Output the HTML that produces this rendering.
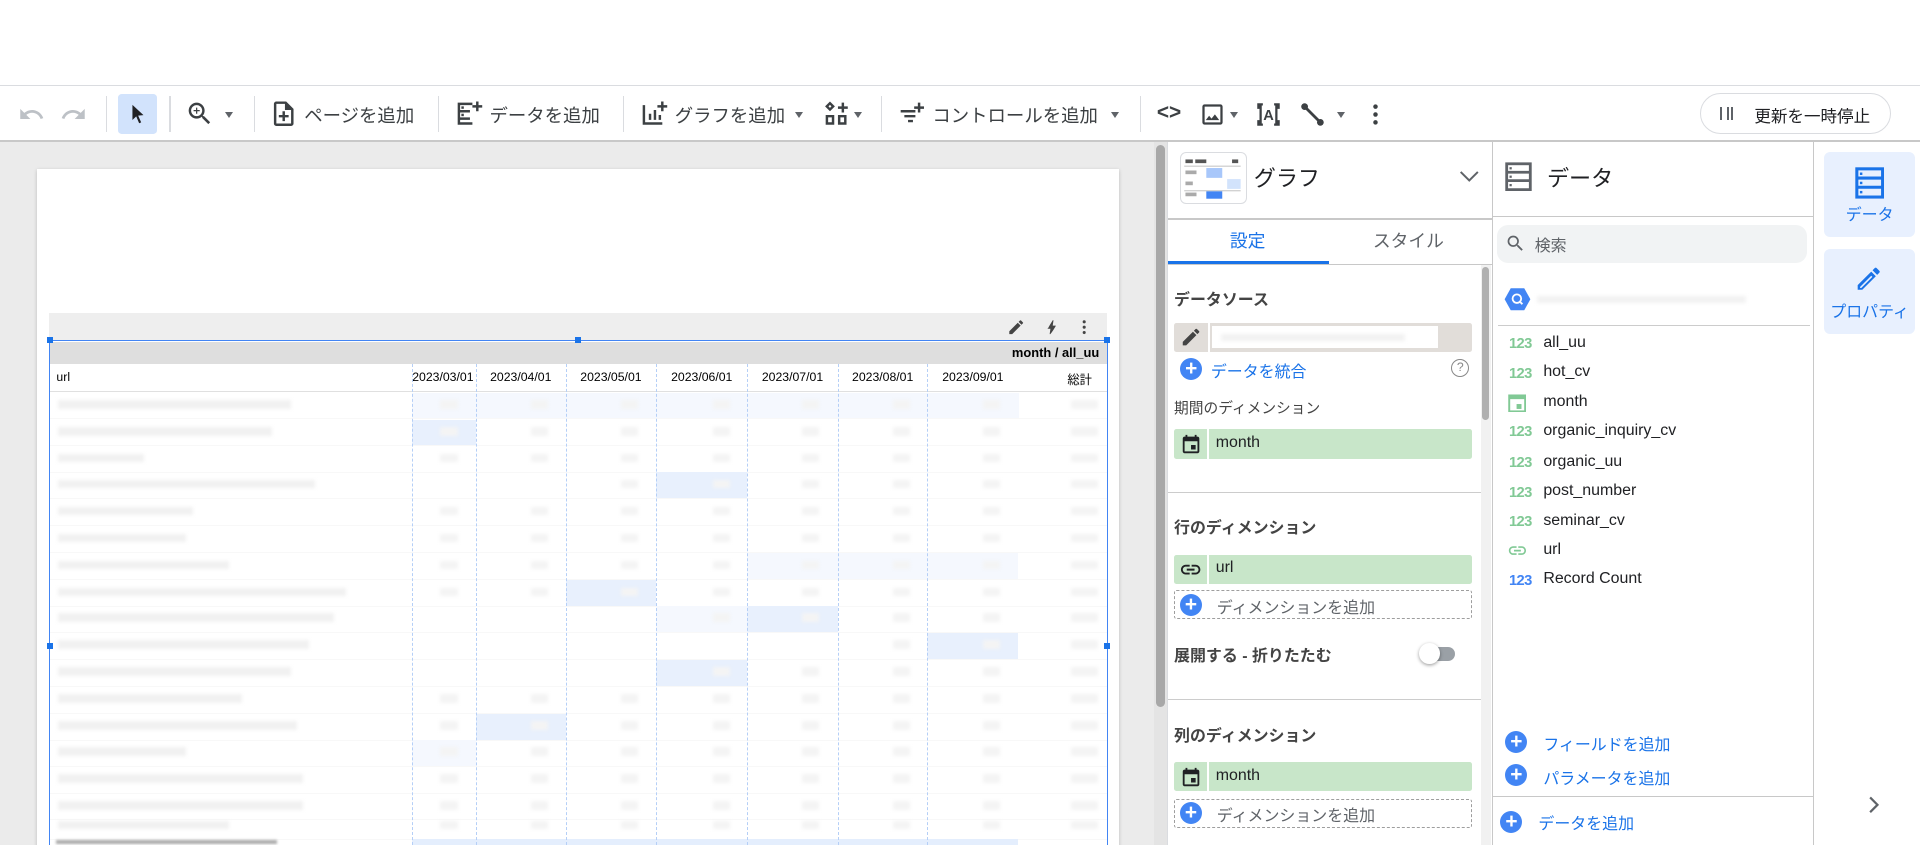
<!DOCTYPE html>
<html><head><meta charset="utf-8">
<style>
html,body{margin:0;padding:0;width:1920px;height:845px;overflow:hidden;background:#fff}
#r{zoom:1.2268;position:relative;width:1565px;height:689px;overflow:hidden;font-family:"Liberation Sans","Noto Sans CJK JP",sans-serif;color:#3c4043}
.a{position:absolute}
.sep{position:absolute;top:78px;width:1px;height:30px;background:#dadce0}
.tb{position:absolute;top:83px;font-size:15px;color:#3c4043;white-space:nowrap}
.car{position:absolute;top:91px;width:0;height:0;border-left:4px solid transparent;border-right:4px solid transparent;border-top:5px solid #5f6368}
.row{position:absolute;left:41px;width:861px;height:21px;border-bottom:1px solid #f8f8f8}
.u{position:absolute;left:6px;top:6px;height:7px;background:#f1f1f1;filter:blur(1.5px)}
.n{position:absolute;top:6px;width:14px;height:7px;background:#f4f4f4;filter:blur(1.5px)}
.hl{position:absolute;top:0;height:21px;background:#e8f0fd}
.hl2{position:absolute;top:0;height:21px;background:#f5f8fe}
.col{position:absolute;top:297px;height:392px;border-left:1px dashed #b5cff7}
.sec{position:absolute;left:957px;font-size:13px;color:#444;font-weight:bold}
.chip{position:absolute;left:957px;width:243px;height:24px;background:#c8e6c9;border-radius:2px}
.chip .ic{position:absolute;left:0;top:0;width:27px;height:24px;border-right:2px solid #fff}
.chip span{position:absolute;left:34px;top:4px;font-size:13px;color:#202124}
.add{position:absolute;left:957px;width:241px;height:22px;border:1px dashed #9e9e9e;border-radius:2px}
.add span{position:absolute;left:34px;top:3px;font-size:13px;color:#5f6368}
.pc{position:absolute;width:18px;height:18px;border-radius:50%;background:#4285f4;color:#fff;font-size:17px;line-height:18px;text-align:center;font-weight:bold}
.f{position:absolute;left:1230px;font-size:12px;color:#81c995;font-weight:bold;letter-spacing:-0.5px}
.fn{position:absolute;left:1258px;font-size:13px;color:#202124}
.hline{position:absolute;height:1px;background:#dadce0}
.dh{position:absolute;top:302px;text-align:center;font-size:10px;color:#000}
</style></head><body><div id="r">
<div class="hline" style="left:0;top:69px;width:1565px;background:#dadce0"></div>
<div class="a" style="left:0;top:114px;width:1565px;height:2px;background:#c8c8c8"></div>

<svg class="a" style="left:15px;top:82px" width="22" height="22" viewBox="0 0 24 24"><path d="M12.5 8c-2.65 0-5.05.99-6.9 2.6L2 7v9h9l-3.62-3.62c1.39-1.16 3.16-1.88 5.12-1.88 3.54 0 6.55 2.31 7.6 5.5l2.37-.78C21.08 11.03 17.15 8 12.5 8z" fill="#bdc1c6"/></svg>
<svg class="a" style="left:49px;top:82px" width="22" height="22" viewBox="0 0 24 24"><path d="M18.4 10.6C16.55 8.99 14.15 8 11.5 8c-4.65 0-8.58 3.030-9.96 7.22L3.9 16c1.05-3.19 4.05-5.5 7.6-5.5 1.95 0 3.73.72 5.12 1.88L13 16h9V7l-3.6 3.6z" fill="#bdc1c6"/></svg>
<div class="sep" style="left:86px"></div>
<div class="a" style="left:96px;top:77px;width:32px;height:32px;background:#d2e3fc;border-radius:3px"></div>
<svg class="a" style="left:103px;top:84px" width="18" height="18" viewBox="0 0 24 24"><path d="M7 2l12 11.2-5.8.5 3.3 7.3-2.2 1-3.2-7.4L7 18.5z" fill="#202124"/></svg>
<div class="sep" style="left:138px"></div>
<svg class="a" style="left:151px;top:81px" width="24" height="24" viewBox="0 0 24 24"><path d="M15.5 14h-.79l-.28-.27A6.471 6.471 0 0016 9.5 6.5 6.5 0 109.5 16c1.61 0 3.09-.59 4.23-1.57l.27.28v.79l5 4.99L20.49 19l-4.99-5zm-6 0C7.01 14 5 11.99 5 9.5S7.010 5 9.5 5 14 7.01 14 9.5 11.99 14 9.5 14zm.5-7H9v2H7v1h2v2h1v-2h2V9h-2z" fill="#3c4043"/></svg>
<div class="car" style="left:183px"></div>
<div class="sep" style="left:207px"></div>
<svg class="a" style="left:219px;top:81px" width="24" height="24" viewBox="0 0 24 24"><path d="M14 2H6c-1.1 0-2 .9-2 2v16c0 1.1.9 2 2 2h12c1.1 0 2-.9 2-2V8l-6-6zm4 18H6V4h7v5h5v11zm-7-2h2v-3h3v-2h-3v-3h-2v3H8v2h3z" fill="#3c4043"/></svg>
<div class="tb" style="left:248px">ページを追加</div>
<div class="sep" style="left:357px"></div>
<svg class="a" style="left:370px;top:81px" width="24" height="24" viewBox="0 0 24 24"><path d="M3 3h12v2H3zM3 9h10v2H3zM3 15h10v2H3zM3 3h2v18H3zM3 19h12v2H3zM18 2h2v3h3v2h-3v3h-2V7h-3V5h3z" fill="#3c4043"/><rect x="6" y="6" width="2" height="2" fill="#3c4043"/><rect x="6" y="12" width="2" height="2" fill="#3c4043"/></svg>
<div class="tb" style="left:399px">データを追加</div>
<div class="sep" style="left:508px"></div>
<svg class="a" style="left:521px;top:81px" width="24" height="24" viewBox="0 0 24 24"><path d="M3 5h2v14h14v2H3zM8 12h2v5H8zM12 9h2v8h-2zM16 13h2v4h-2zM18 2h2v3h3v2h-3v3h-2V7h-3V5h3z" fill="#3c4043"/></svg>
<div class="tb" style="left:550px">グラフを追加</div>
<div class="car" style="left:648px"></div>
<svg class="a" style="left:670px;top:81px" width="24" height="24" viewBox="0 0 24 24"><path d="M6.5 2l4 4-4 4-4-4zM6.5 4.8L5.3 6l1.2 1.2L7.7 6zM3 13h7v8H3zm2 2v4h3v-4zM13 13h7v8h-7zm2 2v4h3v-4zM16 3h2v3h3v2h-3v3h-2V8h-3V6h3z" fill="#3c4043"/></svg>
<div class="car" style="left:696px"></div>
<div class="sep" style="left:718px"></div>
<svg class="a" style="left:731px;top:81px" width="24" height="24" viewBox="0 0 24 24"><path d="M3 9h12v2H3zM6 13h9v2H6zM9 17h4v2H9zM17 3h2v3h3v2h-3v3h-2V8h-3V6h3z" fill="#3c4043"/></svg>
<div class="tb" style="left:760px">コントロールを追加</div>
<div class="car" style="left:906px"></div>
<div class="sep" style="left:929px"></div>
<div class="tb" style="left:943px;font-size:17px;font-weight:bold;top:82px">&lt;&gt;</div>
<svg class="a" style="left:977px;top:82px" width="22" height="22" viewBox="0 0 24 24"><path d="M19 5v14H5V5h14m0-2H5c-1.1 0-2 .9-2 2v14c0 1.1.9 2 2 2h14c1.1 0 2-.9 2-2V5c0-1.1-.9-2-2-2zm-4.86 8.86l-3 3.87L9 13.14 6 17h12l-3.86-5.14z" fill="#3c4043"/></svg>
<div class="car" style="left:1003px"></div>
<svg class="a" style="left:1023px;top:82px" width="22" height="22" viewBox="0 0 24 24"><path d="M2 2h5v2H4v3H2zM17 2h5v5h-2V4h-3zM2 17h2v3h3v2H2zM20 17h2v5h-5v-2h3zM4 4h2v16H4zM18 4h2v16h-2z" fill="#3c4043"/><text x="12" y="17" font-size="13" text-anchor="middle" font-family="Liberation Sans" font-weight="bold" fill="#3c4043">A</text></svg>
<svg class="a" style="left:1059px;top:82px" width="22" height="22" viewBox="0 0 24 24"><circle cx="5" cy="5" r="3" fill="#3c4043"/><circle cx="19" cy="19" r="3" fill="#3c4043"/><path d="M5 5l14 14" stroke="#3c4043" stroke-width="2.5"/></svg>
<div class="car" style="left:1090px"></div>
<svg class="a" style="left:1110px;top:82px" width="22" height="22" viewBox="0 0 24 24"><circle cx="12" cy="5" r="2" fill="#3c4043"/><circle cx="12" cy="12" r="2" fill="#3c4043"/><circle cx="12" cy="19" r="2" fill="#3c4043"/></svg>
<div class="a" style="left:1386px;top:76px;width:154px;height:32px;border:1px solid #dadce0;border-radius:17px"></div>
<div class="a" style="left:1402px;top:87px;width:4px;height:11px;border:2px solid #5f6368;border-width:0 2px"></div>
<div class="a" style="left:1407px;top:87px;width:4px;height:11px;border:2px solid #5f6368;border-width:0 2px 0 0"></div>
<div class="tb" style="left:1430px;top:84px;font-size:13.5px;color:#202124">更新を一時停止</div>

<div class="a" style="left:0;top:116px;width:941px;height:573px;background:#ebebeb"></div>
<div class="a" style="left:30px;top:138px;width:882px;height:560px;background:#fff;box-shadow:0 1px 3px rgba(0,0,0,.2)"></div>
<div class="a" style="left:40px;top:255px;width:862px;height:23px;background:#eeeeee"></div>
<svg class="a" style="left:821px;top:259px" width="15" height="15" viewBox="0 0 24 24"><path d="M3 17.25V21h3.75L17.81 9.94l-3.75-3.75L3 17.25zM20.71 7.04a1 1 0 000-1.41l-2.34-2.34a1 1 0 00-1.41 0l-1.83 1.83 3.75 3.75 1.83-1.83z" fill="#444"/></svg>
<svg class="a" style="left:849px;top:259px" width="15" height="15" viewBox="0 0 24 24"><path d="M11 21h-1l1-7H7.5c-.88 0 .45-.75.45-.75C9.44 10.6 11.8 6.5 14 3h1l-1 7h3.5c.49 0 .56.33.47.51C13.58 18.17 11 21 11 21z" fill="#444"/></svg>
<svg class="a" style="left:876px;top:259px" width="15" height="15" viewBox="0 0 24 24"><circle cx="12" cy="5" r="2" fill="#444"/><circle cx="12" cy="12" r="2" fill="#444"/><circle cx="12" cy="19" r="2" fill="#444"/></svg>
<div class="a" style="left:41px;top:279px;width:861px;height:18px;background:#dedede"></div>
<div class="a" style="left:780px;top:281px;width:116px;text-align:right;font-size:10.5px;font-weight:bold;color:#000">month / all_uu</div>
<div class="a" style="left:41px;top:297px;width:861px;height:22px;background:#fff;border-bottom:1px solid #e0e0e0"></div>
<div class="a" style="left:46px;top:302px;font-size:10px;color:#000">url</div>
<div class="a" style="left:336px;top:302px;width:50px;height:14px;overflow:hidden"><div style="position:absolute;right:0;top:0;font-size:10px;color:#000;white-space:nowrap">2023/03/01</div></div>
<div class="dh" style="left:388px;width:73px">2023/04/01</div>
<div class="dh" style="left:461px;width:74px">2023/05/01</div>
<div class="dh" style="left:535px;width:74px">2023/06/01</div>
<div class="dh" style="left:609px;width:74px">2023/07/01</div>
<div class="dh" style="left:683px;width:73px">2023/08/01</div>
<div class="dh" style="left:756px;width:74px">2023/09/01</div>
<div class="a" style="left:850px;top:302px;width:40px;text-align:right;font-size:10px;color:#000">総計</div>

<div class="row" style="top:320px"><div class="hl2" style="left:295px;width:495px"></div><div class="u" style="width:190px"></div><div class="n" style="left:318px"></div><div class="n" style="left:392px"></div><div class="n" style="left:465px"></div><div class="n" style="left:540px"></div><div class="n" style="left:613px"></div><div class="n" style="left:687px"></div><div class="n" style="left:760px"></div><div class="n" style="left:832px;width:22px"></div></div>
<div class="row" style="top:342px"><div class="hl" style="left:295px;width:52px"></div><div class="u" style="width:175px"></div><div class="n" style="left:318px"></div><div class="n" style="left:392px"></div><div class="n" style="left:465px"></div><div class="n" style="left:540px"></div><div class="n" style="left:613px"></div><div class="n" style="left:687px"></div><div class="n" style="left:760px"></div><div class="n" style="left:832px;width:22px"></div></div>
<div class="row" style="top:364px"><div class="u" style="width:70px"></div><div class="n" style="left:318px"></div><div class="n" style="left:392px"></div><div class="n" style="left:465px"></div><div class="n" style="left:540px"></div><div class="n" style="left:613px"></div><div class="n" style="left:687px"></div><div class="n" style="left:760px"></div><div class="n" style="left:832px;width:22px"></div></div>
<div class="row" style="top:385px"><div class="hl" style="left:494px;width:74px"></div><div class="u" style="width:210px"></div><div class="n" style="left:465px"></div><div class="n" style="left:540px"></div><div class="n" style="left:613px"></div><div class="n" style="left:687px"></div><div class="n" style="left:760px"></div><div class="n" style="left:832px;width:22px"></div></div>
<div class="row" style="top:407px"><div class="u" style="width:110px"></div><div class="n" style="left:318px"></div><div class="n" style="left:392px"></div><div class="n" style="left:465px"></div><div class="n" style="left:540px"></div><div class="n" style="left:613px"></div><div class="n" style="left:687px"></div><div class="n" style="left:760px"></div><div class="n" style="left:832px;width:22px"></div></div>
<div class="row" style="top:429px"><div class="u" style="width:105px"></div><div class="n" style="left:318px"></div><div class="n" style="left:392px"></div><div class="n" style="left:465px"></div><div class="n" style="left:540px"></div><div class="n" style="left:613px"></div><div class="n" style="left:687px"></div><div class="n" style="left:760px"></div><div class="n" style="left:832px;width:22px"></div></div>
<div class="row" style="top:451px"><div class="hl2" style="left:568px;width:221px"></div><div class="u" style="width:140px"></div><div class="n" style="left:318px"></div><div class="n" style="left:392px"></div><div class="n" style="left:465px"></div><div class="n" style="left:540px"></div><div class="n" style="left:613px"></div><div class="n" style="left:687px"></div><div class="n" style="left:760px"></div><div class="n" style="left:832px;width:22px"></div></div>
<div class="row" style="top:473px"><div class="hl" style="left:420px;width:74px"></div><div class="u" style="width:235px"></div><div class="n" style="left:318px"></div><div class="n" style="left:392px"></div><div class="n" style="left:465px"></div><div class="n" style="left:540px"></div><div class="n" style="left:613px"></div><div class="n" style="left:687px"></div><div class="n" style="left:760px"></div><div class="n" style="left:832px;width:22px"></div></div>
<div class="row" style="top:494px"><div class="hl2" style="left:494px;width:74px"></div><div class="hl" style="left:568px;width:74px"></div><div class="u" style="width:225px"></div><div class="n" style="left:540px"></div><div class="n" style="left:613px"></div><div class="n" style="left:687px"></div><div class="n" style="left:760px"></div><div class="n" style="left:832px;width:22px"></div></div>
<div class="row" style="top:516px"><div class="hl" style="left:715px;width:74px"></div><div class="u" style="width:205px"></div><div class="n" style="left:687px"></div><div class="n" style="left:760px"></div><div class="n" style="left:832px;width:22px"></div></div>
<div class="row" style="top:538px"><div class="hl" style="left:494px;width:74px"></div><div class="u" style="width:190px"></div><div class="n" style="left:540px"></div><div class="n" style="left:613px"></div><div class="n" style="left:687px"></div><div class="n" style="left:760px"></div><div class="n" style="left:832px;width:22px"></div></div>
<div class="row" style="top:560px"><div class="u" style="width:150px"></div><div class="n" style="left:318px"></div><div class="n" style="left:392px"></div><div class="n" style="left:465px"></div><div class="n" style="left:540px"></div><div class="n" style="left:613px"></div><div class="n" style="left:687px"></div><div class="n" style="left:760px"></div><div class="n" style="left:832px;width:22px"></div></div>
<div class="row" style="top:582px"><div class="hl" style="left:347px;width:73px"></div><div class="u" style="width:195px"></div><div class="n" style="left:318px"></div><div class="n" style="left:392px"></div><div class="n" style="left:465px"></div><div class="n" style="left:540px"></div><div class="n" style="left:613px"></div><div class="n" style="left:687px"></div><div class="n" style="left:760px"></div><div class="n" style="left:832px;width:22px"></div></div>
<div class="row" style="top:603px"><div class="hl2" style="left:295px;width:52px"></div><div class="u" style="width:105px"></div><div class="n" style="left:318px"></div><div class="n" style="left:392px"></div><div class="n" style="left:465px"></div><div class="n" style="left:540px"></div><div class="n" style="left:613px"></div><div class="n" style="left:687px"></div><div class="n" style="left:760px"></div><div class="n" style="left:832px;width:22px"></div></div>
<div class="row" style="top:625px"><div class="u" style="width:200px"></div><div class="n" style="left:318px"></div><div class="n" style="left:392px"></div><div class="n" style="left:465px"></div><div class="n" style="left:540px"></div><div class="n" style="left:613px"></div><div class="n" style="left:687px"></div><div class="n" style="left:760px"></div><div class="n" style="left:832px;width:22px"></div></div>
<div class="row" style="top:647px"><div class="u" style="width:200px"></div><div class="n" style="left:318px"></div><div class="n" style="left:392px"></div><div class="n" style="left:465px"></div><div class="n" style="left:540px"></div><div class="n" style="left:613px"></div><div class="n" style="left:687px"></div><div class="n" style="left:760px"></div><div class="n" style="left:832px;width:22px"></div></div>
<div class="row" style="top:663px"><div class="u" style="width:140px"></div><div class="n" style="left:318px"></div><div class="n" style="left:392px"></div><div class="n" style="left:465px"></div><div class="n" style="left:540px"></div><div class="n" style="left:613px"></div><div class="n" style="left:687px"></div><div class="n" style="left:760px"></div><div class="n" style="left:832px;width:22px"></div></div>
<div class="a" style="left:336px;top:684px;width:494px;height:6px;background:#e4eefd"></div>
<div class="a" style="left:46px;top:685px;width:180px;height:3px;background:#aaa;filter:blur(1px)"></div>
<div class="col" style="left:336px"></div><div class="col" style="left:388px"></div><div class="col" style="left:461px"></div><div class="col" style="left:535px"></div><div class="col" style="left:609px"></div><div class="col" style="left:683px"></div><div class="col" style="left:756px"></div>
<div class="a" style="left:40px;top:277px;width:863px;height:1px;background:#4285f4"></div>
<div class="a" style="left:40px;top:277px;width:1px;height:413px;background:#4285f4"></div>
<div class="a" style="left:902px;top:277px;width:1px;height:413px;background:#4285f4"></div>
<div class="a" style="left:38px;top:275px;width:5px;height:5px;background:#1a73e8"></div>
<div class="a" style="left:469px;top:275px;width:5px;height:5px;background:#1a73e8"></div>
<div class="a" style="left:900px;top:275px;width:5px;height:5px;background:#1a73e8"></div>
<div class="a" style="left:38px;top:524px;width:5px;height:5px;background:#1a73e8"></div>
<div class="a" style="left:900px;top:524px;width:5px;height:5px;background:#1a73e8"></div>

<div class="a" style="left:941px;top:116px;width:10px;height:573px;background:#e4e4e4"></div>
<div class="a" style="left:942px;top:118px;width:8px;height:458px;background:#a8a8a8;border-radius:4px"></div>

<div class="a" style="left:951px;top:116px;width:265px;height:573px;background:#fff;border-left:1px solid #dadce0"></div>
<div class="a" style="left:962px;top:124px;width:53px;height:41px;border:1px solid #dadce0;border-radius:5px;background:#fff"></div>
<svg class="a" style="left:964px;top:128px" width="50" height="34" viewBox="0 0 50 34"><rect x="2" y="2" width="6" height="3" fill="#555"/><rect x="10" y="2" width="9" height="3" fill="#555"/><rect x="40" y="2" width="5" height="3" fill="#555"/><rect x="1" y="7" width="46" height="1" fill="#ccc"/><rect x="2" y="11" width="9" height="3" fill="#aaa"/><rect x="19" y="9" width="13" height="8" fill="#a8c7fa"/><rect x="2" y="20" width="6" height="3" fill="#aaa"/><rect x="36" y="18" width="11" height="8" fill="#d2e3fc"/><rect x="1" y="27" width="46" height="1" fill="#ccc"/><rect x="2" y="29" width="9" height="3" fill="#aaa"/><rect x="19" y="28" width="13" height="6" fill="#4285f4"/></svg>
<div class="a" style="left:1022px;top:131px;font-size:18px;color:#202124">グラフ</div>
<svg class="a" style="left:1188px;top:136px" width="20" height="16" viewBox="0 0 20 16"><path d="M3 4l7 7 7-7" stroke="#5f6368" stroke-width="1.6" fill="none"/></svg>
<div class="hline" style="left:952px;top:178px;width:264px;background:#c8c8c8"></div>
<div class="a" style="left:952px;top:185px;width:130px;text-align:center;font-size:14.5px;color:#1a73e8">設定</div>
<div class="a" style="left:1082px;top:185px;width:132px;text-align:center;font-size:14.5px;color:#5f6368">スタイル</div>
<div class="a" style="left:952px;top:213px;width:131px;height:2px;background:#1a73e8"></div>
<div class="hline" style="left:952px;top:215px;width:264px;background:#c8c8c8"></div>
<div class="a" style="left:1207px;top:216px;width:8px;height:473px;background:#f1f1f1"></div>
<div class="a" style="left:1208px;top:218px;width:6px;height:124px;background:#b0b0b0;border-radius:3px"></div>
<div class="sec" style="top:234px">データソース</div>
<div class="a" style="left:957px;top:263px;width:243px;height:24px;background:#e1ddd9;border-radius:2px"></div>
<div class="a" style="left:985px;top:263px;width:1px;height:24px;background:#fff"></div>
<svg class="a" style="left:962px;top:266px" width="18" height="18" viewBox="0 0 24 24"><path d="M3 17.25V21h3.75L17.81 9.94l-3.75-3.75L3 17.25zM20.71 7.04a1 1 0 000-1.41l-2.34-2.34a1 1 0 00-1.41 0l-1.83 1.83 3.75 3.75 1.83-1.83z" fill="#444"/></svg>
<div class="a" style="left:988px;top:266px;width:184px;height:18px;background:#fff"></div>
<div class="a" style="left:995px;top:272px;width:150px;height:6px;background:#f2f2f2;filter:blur(1.5px)"></div>
<div class="pc" style="left:962px;top:292px">+</div>
<div class="a" style="left:987px;top:293px;font-size:13px;color:#1a73e8">データを統合</div>
<div class="a" style="left:1183px;top:293px;width:13px;height:13px;border:1.5px solid #888;border-radius:50%;font-size:10px;line-height:13px;text-align:center;color:#888">?</div>
<div class="a" style="left:957px;top:324px;font-size:12px;color:#444">期間のディメンション</div>
<div class="chip" style="top:350px"><div class="ic"><svg style="position:absolute;left:5px;top:3px" width="18" height="18" viewBox="0 0 24 24"><path d="M19 4h-1V2h-2v2H8V2H6v2H5c-1.1 0-2 .9-2 2v14c0 1.1.9 2 2 2h14c1.1 0 2-.9 2-2V6c0-1.1-.9-2-2-2zm0 16H5V9h14v11zM12 13h5v5h-5z" fill="#202124"/></svg></div><span>month</span></div>
<div class="hline" style="left:952px;top:401px;width:255px;background:#ccc"></div>
<div class="sec" style="top:420px">行のディメンション</div>
<div class="chip" style="top:452px"><div class="ic"><svg style="position:absolute;left:4px;top:3px" width="19" height="19" viewBox="0 0 24 24"><path d="M3.9 12c0-1.71 1.39-3.1 3.1-3.1h4V7H7c-2.76 0-5 2.24-5 5s2.24 5 5 5h4v-1.9H7c-1.71 0-3.1-1.39-3.1-3.1zM8 13h8v-2H8v2zm9-6h-4v1.9h4c1.71 0 3.1 1.39 3.1 3.1s-1.39 3.1-3.1 3.1h-4V17h4c2.76 0 5-2.24 5-5s-2.24-5-5-5z" fill="#202124"/></svg></div><span>url</span></div>
<div class="add" style="top:481px"><div class="pc" style="left:4px;top:2px">+</div><span>ディメンションを追加</span></div>
<div class="sec" style="top:524px">展開する - 折りたたむ</div>
<div class="a" style="left:1162px;top:527px;width:24px;height:12px;border-radius:6px;background:#9aa0a6"></div>
<div class="a" style="left:1157px;top:524px;width:17px;height:17px;border-radius:50%;background:#fff;box-shadow:0 1px 3px rgba(0,0,0,.4)"></div>
<div class="hline" style="left:952px;top:570px;width:255px;background:#ccc"></div>
<div class="sec" style="top:589px">列のディメンション</div>
<div class="chip" style="top:621px"><div class="ic"><svg style="position:absolute;left:5px;top:3px" width="18" height="18" viewBox="0 0 24 24"><path d="M19 4h-1V2h-2v2H8V2H6v2H5c-1.1 0-2 .9-2 2v14c0 1.1.9 2 2 2h14c1.1 0 2-.9 2-2V6c0-1.1-.9-2-2-2zm0 16H5V9h14v11zM12 13h5v5h-5z" fill="#202124"/></svg></div><span>month</span></div>
<div class="add" style="top:651px"><div class="pc" style="left:4px;top:2px">+</div><span>ディメンションを追加</span></div>

<div class="a" style="left:1216px;top:116px;width:1px;height:573px;background:#c8c8c8"></div>
<svg class="a" style="left:1227px;top:132px" width="22" height="24" viewBox="0 0 24 26"><rect x="1.5" y="1.5" width="21" height="23" fill="none" stroke="#5f6368" stroke-width="2.5"/><path d="M1.5 9h21M1.5 16.5h21" stroke="#5f6368" stroke-width="2.5"/><rect x="4" y="4.5" width="2" height="2" fill="#5f6368"/><rect x="4" y="12" width="2" height="2" fill="#5f6368"/><rect x="4" y="19.5" width="2" height="2" fill="#5f6368"/></svg>
<div class="a" style="left:1261px;top:131px;font-size:18px;color:#202124">データ</div>
<div class="hline" style="left:1217px;top:176px;width:262px;background:#c8c8c8"></div>
<div class="a" style="left:1220px;top:183px;width:253px;height:31px;background:#f1f3f4;border-radius:9px"></div>
<svg class="a" style="left:1227px;top:190px" width="17" height="17" viewBox="0 0 24 24"><path d="M15.5 14h-.79l-.28-.27A6.471 6.471 0 0016 9.5 6.5 6.5 0 109.5 16c1.61 0 3.09-.59 4.23-1.57l.27.28v.79l5 4.99L20.49 19l-4.99-5zm-6 0C7.01 14 5 11.99 5 9.5S7.01 5 9.5 5 14 7.01 14 9.5 11.99 14 9.5 14z" fill="#5f6368"/></svg>
<div class="a" style="left:1251px;top:190px;font-size:13px;color:#5f6368">検索</div>
<svg class="a" style="left:1226px;top:234px" width="22" height="20" viewBox="0 0 22 20"><path d="M5.5 1h11l5 9-5 9h-11l-5-9z" fill="#4285f4"/><circle cx="10.5" cy="9.5" r="3.5" fill="none" stroke="#fff" stroke-width="1.5"/><path d="M13 12l2 2" stroke="#fff" stroke-width="1.5"/></svg>
<div class="a" style="left:1253px;top:241px;width:170px;height:6px;background:#f2f2f2;filter:blur(1.5px)"></div>
<div class="hline" style="left:1221px;top:265px;width:254px;background:#ccc"></div>
<div class="f" style="top:274px">123</div><div class="fn" style="top:272px">all_uu</div>
<div class="f" style="top:298px">123</div><div class="fn" style="top:296px">hot_cv</div>
<svg class="a" style="left:1229px;top:320px" width="15" height="16" viewBox="0 0 15 16"><rect x="1" y="2" width="13" height="13" fill="none" stroke="#81c995" stroke-width="1.6"/><rect x="1" y="2" width="13" height="3" fill="#81c995"/><rect x="7" y="9" width="4" height="4" fill="#81c995"/></svg><div class="fn" style="top:320px">month</div>
<div class="f" style="top:346px">123</div><div class="fn" style="top:344px">organic_inquiry_cv</div>
<div class="f" style="top:371px">123</div><div class="fn" style="top:369px">organic_uu</div>
<div class="f" style="top:395px">123</div><div class="fn" style="top:393px">post_number</div>
<div class="f" style="top:419px">123</div><div class="fn" style="top:417px">seminar_cv</div>
<svg class="a" style="left:1228px;top:442px" width="17" height="14" viewBox="0 0 24 20"><path d="M3.9 10c0-1.71 1.39-3.1 3.1-3.1h4V5H7c-2.76 0-5 2.24-5 5s2.24 5 5 5h4v-1.9H7c-1.71 0-3.1-1.39-3.1-3.1zM8 11h8V9H8v2zm9-6h-4v1.9h4c1.71 0 3.1 1.39 3.1 3.1s-1.39 3.1-3.1 3.1h-4V15h4c2.76 0 5-2.24 5-5s-2.24-5-5-5z" fill="#81c995"/></svg><div class="fn" style="top:441px">url</div>
<div class="f" style="top:467px;color:#4285f4">123</div><div class="fn" style="top:465px">Record Count</div>
<div class="pc" style="left:1227px;top:596px">+</div><div class="a" style="left:1258px;top:597px;font-size:13px;color:#1a73e8">フィールドを追加</div>
<div class="pc" style="left:1227px;top:623px">+</div><div class="a" style="left:1258px;top:624px;font-size:13px;color:#1a73e8">パラメータを追加</div>
<div class="hline" style="left:1217px;top:649px;width:262px;background:#c8c8c8"></div>
<div class="pc" style="left:1223px;top:661px">+</div><div class="a" style="left:1254px;top:661px;font-size:13px;color:#1a73e8">データを追加</div>

<div class="a" style="left:1478px;top:116px;width:1px;height:573px;background:#c8c8c8"></div>
<div class="a" style="left:1487px;top:124px;width:74px;height:69px;background:#e8f0fe;border-radius:5px"></div>
<svg class="a" style="left:1512px;top:136px" width="24" height="26" viewBox="0 0 24 26"><rect x="1.5" y="1.5" width="21" height="23" fill="none" stroke="#1a73e8" stroke-width="2.5"/><path d="M1.5 9h21M1.5 16.5h21" stroke="#1a73e8" stroke-width="2.5"/><rect x="4" y="4.5" width="2" height="2" fill="#1a73e8"/><rect x="4" y="12" width="2" height="2" fill="#1a73e8"/><rect x="4" y="19.5" width="2" height="2" fill="#1a73e8"/></svg>
<div class="a" style="left:1487px;top:165px;width:74px;text-align:center;font-size:13px;color:#1a73e8">データ</div>
<div class="a" style="left:1487px;top:203px;width:74px;height:69px;background:#e8f0fe;border-radius:5px"></div>
<svg class="a" style="left:1511px;top:215px" width="24" height="24" viewBox="0 0 24 24"><path d="M3 17.25V21h3.75L17.81 9.94l-3.75-3.75L3 17.25zm2.92 2.33H5v-.92l9.06-9.06.92.92L5.92 19.58zM20.71 7.04a1 1 0 000-1.41l-2.34-2.34a1 1 0 00-1.41 0l-1.83 1.83 3.75 3.75 1.83-1.83z" fill="#1a73e8"/></svg>
<div class="a" style="left:1482px;top:244px;width:84px;text-align:center;font-size:13px;color:#1a73e8;white-space:nowrap">プロパティ</div>
<svg class="a" style="left:1519px;top:648px" width="16" height="16" viewBox="0 0 16 16"><path d="M5 2l6 6-6 6" stroke="#5f6368" stroke-width="1.8" fill="none"/></svg>
</div></body></html>
